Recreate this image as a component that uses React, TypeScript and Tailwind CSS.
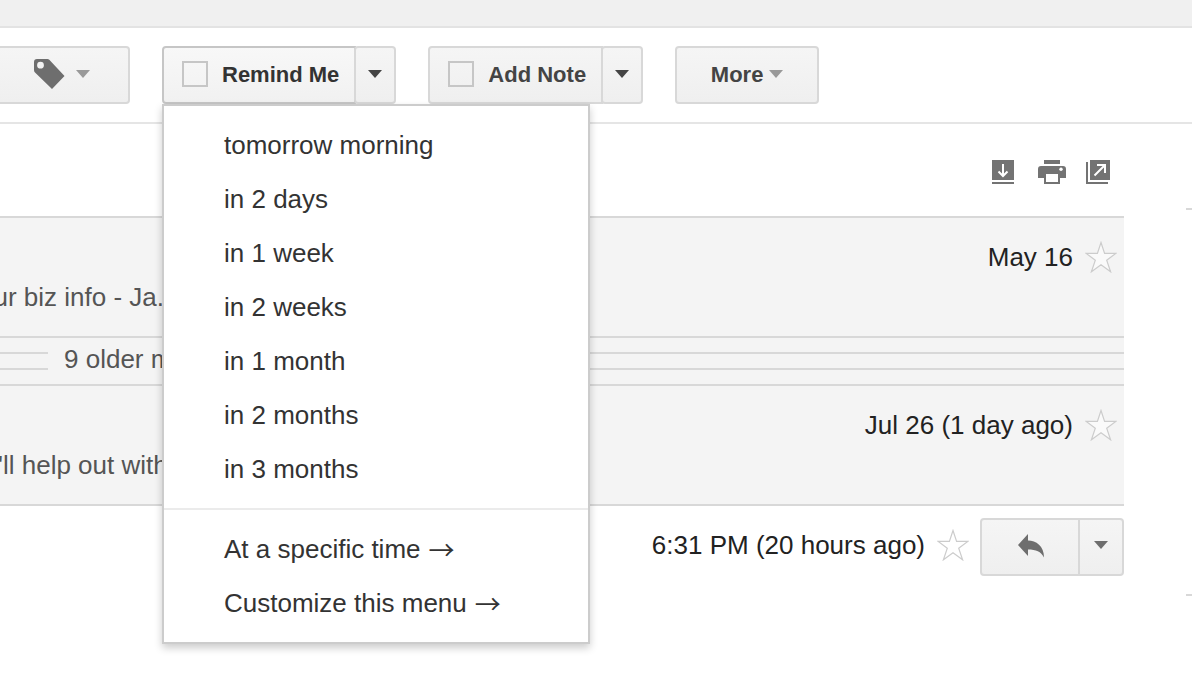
import React from 'react';
import clsx from 'clsx';

const timeOptions = [
  'tomorrow morning',
  'in 2 days',
  'in 1 week',
  'in 2 weeks',
  'in 1 month',
  'in 2 months',
  'in 3 months',
];

const actionOptions = ['At a specific time', 'Customize this menu'];

const buttonStyle = 'border-2 border-[#d8d8d8] bg-linear-to-b from-[#f5f5f5] to-[#efefef]';

const Caret = ({ className }: { className: string }) => (
  <svg width="14" height="8" viewBox="0 0 14 8" className={clsx('shrink-0', className)} fill="currentColor" aria-hidden="true">
    <path d="M0 0h14L7 8z" />
  </svg>
);

const StarButton = ({ label }: { label: string }) => (
  <button type="button" aria-label={label} className="shrink-0">
    <svg width="32" height="32" viewBox="0 0 32 32" fill="#fff" fillOpacity="0.5" stroke="#cccccc" strokeWidth="1.2" aria-hidden="true">
      <path d="M16 1.5l3.6 10.9h11.2l-9.1 6.8 3.9 11.6L16 23.8l-9.6 7 3.9-11.6-9.1-6.8h11.2z" />
    </svg>
  </button>
);

type SplitButtonProps = {
  label: string;
  open?: boolean;
  children?: React.ReactNode;
};

const SplitButton = ({ label, open, children }: SplitButtonProps) => (
  <div className="relative flex shrink-0">
    <label
      className={clsx(
        'flex h-[58px] items-center gap-3.5 rounded-l-[4px] pl-[18px] pr-[15px] pb-0.5 text-[22px] font-bold whitespace-nowrap',
        buttonStyle,
        open ? 'border-[#c6c6c6]! from-[#f8f8f8] to-[#f1f1f1] text-[#333]' : 'text-[#444]'
      )}
    >
      <input type="checkbox" className="size-[26px] appearance-none border-2 border-[#c6c6c6]" />
      {label}
    </label>
    <button
      type="button"
      aria-label={`${label} options`}
      aria-expanded={!!open}
      className={clsx('-ml-0.5 flex h-[58px] w-[42px] items-center justify-center rounded-[4px] pb-0.5', buttonStyle)}
    >
      <Caret className="text-[#444]" />
    </button>
    {children}
  </div>
);

const MenuItem = ({ text, arrow }: { text: string; arrow?: boolean }) => (
  <button type="button" role="menuitem" className="flex h-[54px] w-full items-center gap-2 pl-[60px] text-[26px] text-[#333]">
    {text}
    {arrow && <span className="font-['Noto_Sans_CJK_JP',sans-serif] leading-none">→</span>}
  </button>
);

const RemindMenu = () => (
  <div
    role="menu"
    className="absolute top-full left-0 z-10 w-[428px] border-2 border-[#cccccc] bg-white shadow-[0_4px_8px_rgba(0,0,0,0.2)]"
  >
    <div className="py-3">
      {timeOptions.map((text) => (
        <MenuItem key={text} text={text} />
      ))}
    </div>
    <div className="border-t-2 border-[#ebebeb] py-3">
      {actionOptions.map((text) => (
        <MenuItem key={text} text={text} arrow />
      ))}
    </div>
  </div>
);

const Toolbar = () => (
  <div className="flex gap-8 border-b-2 border-[#e5e5e5] py-[18px]">
    <button
      type="button"
      aria-label="Labels"
      className={clsx('flex h-[58px] w-[130px] shrink-0 items-center gap-[11px] rounded-r-[4px] border-l-0! pb-0.5 pl-[34px]', buttonStyle)}
    >
      <svg width="31" height="31" viewBox="0 0 31 31" fill="#6e6e6e" fillRule="evenodd" aria-hidden="true">
        <path d="M3 0h10.500q1 0 1.800.8L30.500 17 18 30 1 13.500Q0 12.500 0 11V3Q0 0 3 0zM6.500 2.800a3.400 3.400 0 1 0 0 6.800 3.400 3.400 0 0 0 0-6.800z" />
      </svg>
      <Caret className="text-[#999]" />
    </button>
    <SplitButton label="Remind Me" open>
      <RemindMenu />
    </SplitButton>
    <SplitButton label="Add Note" />
    <button
      type="button"
      className={clsx('flex h-[58px] w-36 shrink-0 items-center justify-center gap-1.5 rounded-[4px] pb-0.5 text-[22px] font-bold text-[#444]', buttonStyle)}
    >
      More
      <Caret className="text-[#999]" />
    </button>
  </div>
);

const ThreadActions = () => (
  <div className="flex justify-end gap-5 pt-9 pr-3.5 pb-8 text-[#737373]">
    <button type="button" aria-label="Download">
      <svg width="26" height="24" viewBox="0 0 26 24" fill="currentColor" aria-hidden="true">
        <path d="M0 0h22v20H0zM0 22h22v2H0z" />
        <path d="M11 4v12M6.500 11.500L11 16l4.500-4.500" fill="none" stroke="#fff" strokeWidth="2" />
      </svg>
    </button>
    <button type="button" aria-label="Print all">
      <svg width="28" height="24" viewBox="0 0 28 24" fill="currentColor" aria-hidden="true">
        <path d="M6 0h16v4H6zM3 6h22q3 0 3 3v9h-6v6H6v-6H0V9q0-3 3-3zM8 14v8h12v-8z" fillRule="evenodd" />
        <circle cx="23" cy="9.300" r="1.700" fill="#fff" />
      </svg>
    </button>
    <button type="button" aria-label="In new window">
      <svg width="24" height="24" viewBox="0 0 24 24" fill="currentColor" aria-hidden="true">
        <path d="M4 0h20v20H4zM0 2h2v20h20v2H0z" />
        <path d="M8.500 15.500L19 5M11 5h8v8" fill="none" stroke="#fff" strokeWidth="2" />
      </svg>
    </button>
  </div>
);

type CollapsedMessageProps = {
  date: string;
  snippet: string;
  alignEnd?: boolean;
};

const CollapsedMessage = ({ date, snippet, alignEnd }: CollapsedMessageProps) => (
  <div className="flex flex-col gap-2.5 py-6">
    <div className="flex h-[30px] items-center justify-end gap-3 pr-[7px] text-[#222]">
      {date}
      <StarButton label={`Star message from ${date}`} />
    </div>
    <div
      className={clsx(
        '-ml-0.5 flex h-[30px] w-[166px] items-center whitespace-nowrap text-[#555]',
        alignEnd && 'justify-end'
      )}
    >
      {snippet}
    </div>
  </div>
);

const OlderMessages = () => (
  <div className="flex h-[50px] items-center gap-4 border-y-2 border-[#d8d8d8]">
    <div className="h-[18px] w-12 border-y-2 border-[#d8d8d8]" />
    <button type="button" className="pb-1 text-[#555]">9 older messages</button>
    <div className="h-[18px] flex-1 border-y-2 border-[#d8d8d8]" />
  </div>
);

const App = () => {
  return (
    <div className="min-h-screen overflow-hidden bg-white font-['Liberation_Sans',Arial,sans-serif]">
      <header className="h-7 border-b-2 border-[#e3e3e3] bg-[#f0f0f0]" />
      <Toolbar />
      <div className="flex">
        <main className="min-w-0 flex-1 text-[26px]">
          <ThreadActions />
          <section className="border-y-2 border-[#d8d8d8] bg-[#f4f4f4]">
            <CollapsedMessage date="May 16" snippet="ur biz info - Ja." alignEnd />
            <OlderMessages />
            <CollapsedMessage date="Jul 26 (1 day ago)" snippet="'ll help out with" />
          </section>
          <section className="flex justify-end gap-[11px] pt-3">
            <div className="flex h-[54px] items-center gap-3 text-[#222]">
              6:31 PM (20 hours ago)
              <StarButton label="Star latest message" />
            </div>
            <div className="flex">
              <button
                type="button"
                aria-label="Reply"
                className={clsx('flex h-[58px] w-[100px] items-center justify-center rounded-l-[4px] pb-0.5', buttonStyle)}
              >
                <svg width="28" height="24" viewBox="0 0 28 24" fill="#6e6e6e" aria-hidden="true">
                  <path d="M2 11L12 0v6.500C20 6.500 28 12 28 23.500 25 17.500 20 15.500 12 15.500v6.500z" />
                </svg>
              </button>
              <button
                type="button"
                aria-label="More reply options"
                className={clsx('-ml-0.5 flex h-[58px] w-[46px] items-center justify-center rounded-r-[4px] pb-1', buttonStyle)}
              >
                <Caret className="text-[#6e6e6e]" />
              </button>
            </div>
          </section>
        </main>
        <aside className="flex w-[68px] shrink-0 flex-col items-end gap-96 pt-[84px]">
          <div className="h-0.5 w-1.5 bg-[#d8d8d8]" />
          <div className="h-0.5 w-1.5 bg-[#d8d8d8]" />
        </aside>
      </div>
    </div>
  );
};

export default App;
